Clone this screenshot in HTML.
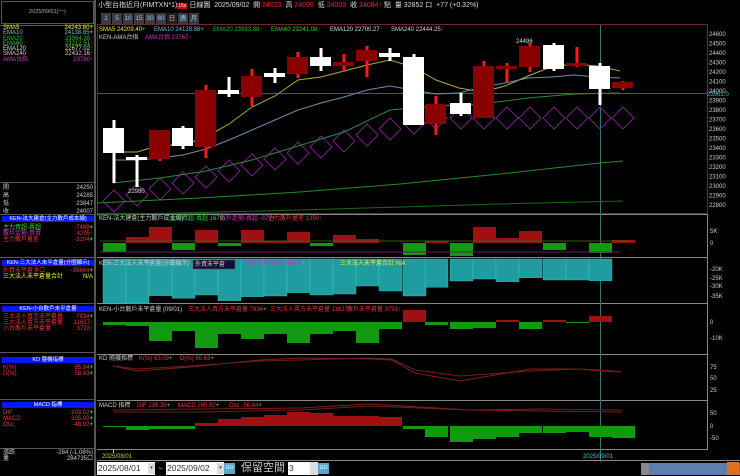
<!DOCTYPE html>
<html><head><meta charset="utf-8">
<style>
*{margin:0;padding:0;box-sizing:border-box}
body{width:740px;height:476px;background:#000;overflow:hidden;position:relative;font-family:"Liberation Sans","Noto Sans CJK TC",sans-serif;color:#ddd}
.a{position:absolute;white-space:nowrap}
.s{font-size:6px;line-height:6px}
.lbl{font-size:6px;line-height:6px}
.bh{position:absolute;left:2px;width:92px;height:6px;background:#0018ff;color:#fff;font-size:5.5px;line-height:6px;text-align:center}
.r{right:0;text-align:right}
.btn{position:absolute;top:13px;height:11px;width:10px;background:#3c3c3c;color:#8cf;font-size:6.5px;line-height:11px;text-align:center}
</style></head><body>
<!-- left panel -->
<div class="a" style="left:0;top:0;width:96px;height:476px;background:#000;border-right:2px solid #555"></div>
<div class="a" style="left:1px;top:1px;width:93px;height:23px;border:1px solid #555;font-size:5.5px;line-height:21px;text-align:center;color:#aaa">2025/09/01(一)</div>
<div class="a" style="left:0;top:25px;width:95px;height:1px;background:#555"></div>
<div class="a s" style="left:3px;top:26px;width:90px;line-height:5.3px">
<div style="color:#ee3"><span>SMA5</span><span style="float:right">24243.60<b style="color:#3e3">+</b></span></div>
<div style="color:#7bd"><span>EMA10</span><span style="float:right">24138.85<b style="color:#3e3">+</b></span></div>
<div style="color:#2b2"><span>EMA20</span><span style="float:right">23984.38<b style="color:#e33">↑</b></span></div>
<div style="color:#3c3"><span>EMA60</span><span style="float:right">23212.51<b style="color:#e33">↑</b></span></div>
<div style="color:#ddd"><span>EMA120</span><span style="float:right">22677.02<b style="color:#e33">↑</b></span></div>
<div style="color:#dcc"><span>SMA240</span><span style="float:right">22432.16<b style="color:#e33">↑</b></span></div>
<div style="color:#c3c"><span>AMA台指</span><span style="float:right">23760<b style="color:#e33">↑</b></span></div>
</div>
<div class="a" style="left:0;top:182px;width:95px;height:1px;background:#555"></div>
<div class="a s" style="left:3px;top:184px;width:90px;line-height:8px;color:#ccc">
<div>開<span style="float:right">24250</span></div>
<div>高<span style="float:right">24285</span></div>
<div>低<span style="float:right">23847</span></div>
<div>收<span style="float:right">24007</span></div>
</div>
<div class="a" style="left:0;top:214px;width:95px;height:1px;background:#555"></div>
<div class="bh" style="top:216px">KEN-法大建倉(主力散戶成本線)</div>
<div class="a s" style="left:3px;top:225px;width:90px;line-height:6px">
<div style="color:#3d3">主力買超-賣超<span style="float:right;color:#e33">-7489<b style="color:#3e3">+</b></span></div>
<div style="color:#c3c">散戶走勢-買賣<span style="float:right;color:#e33">4295<b>↑</b></span></div>
<div style="color:#e33">主力散戶量差<span style="float:right">-3204<b style="color:#3e3">+</b></span></div>
</div>
<div class="a" style="left:0;top:257px;width:95px;height:1px;background:#555"></div>
<div class="bh" style="top:260px">KEN-三大法人未平倉量(分園顯示)</div>
<div class="a s" style="left:3px;top:268px;width:90px;line-height:6px">
<div style="color:#e33">外資未平倉淨口<span style="float:right">-35664<b style="color:#3e3">+</b></span></div>
<div style="color:#ee3">三大法人未平倉量合計<span style="float:right">N/A</span></div>
</div>
<div class="a" style="left:0;top:303px;width:95px;height:1px;background:#555"></div>
<div class="bh" style="top:306px">KEN-小台散戶未平倉量</div>
<div class="a s" style="left:3px;top:314px;width:90px;line-height:6px">
<div style="color:#e33">三大法人買方未平倉量<span style="float:right">7834<b style="color:#3e3">+</b></span></div>
<div style="color:#e33">三大法人賣方未平倉量<span style="float:right">11627<b>↑</b></span></div>
<div style="color:#e33">小台散戶未平倉量<span style="float:right">3793<b>↑</b></span></div>
</div>
<div class="a" style="left:0;top:352px;width:95px;height:1px;background:#555"></div>
<div class="bh" style="top:357px">KD 隨機指標</div>
<div class="a s" style="left:3px;top:365px;width:90px;line-height:6px">
<div style="color:#e33">K(%)<span style="float:right">65.94<b style="color:#3e3">+</b></span></div>
<div style="color:#e33">D(%)<span style="float:right">58.43<b style="color:#3e3">+</b></span></div>
</div>
<div class="a" style="left:0;top:399px;width:95px;height:1px;background:#555"></div>
<div class="bh" style="top:402px">MACD 指標</div>
<div class="a s" style="left:3px;top:410px;width:90px;line-height:6px">
<div style="color:#e33">DIF<span style="float:right">203.02<b style="color:#3e3">+</b></span></div>
<div style="color:#e33">MACD<span style="float:right">205.92<b style="color:#3e3">+</b></span></div>
<div style="color:#e33">Osc<span style="float:right">-48.92<b style="color:#3e3">+</b></span></div>
</div>
<div class="a" style="left:0;top:448px;width:95px;height:1px;background:#555"></div>
<div class="a s" style="left:3px;top:450px;width:90px;line-height:6px;color:#ccc">
<div>漲跌<span style="float:right">-284 (-1.08%)</span></div>
<div>量<span style="float:right">284735口</span></div>
</div>

<!-- header -->
<div class="a" style="left:98px;top:1px;font-size:7px;line-height:9px;color:#ddd">小型台指近月(FIMTXN*1)<span style="background:#c00;color:#fff;font-size:5px;padding:0 1px">15s</span> 日線圖 &nbsp;2025/09/02 &nbsp;開 <span style="color:#e22">24023</span> &nbsp;高 <span style="color:#e22">24096</span> &nbsp;低 <span style="color:#e22">24009</span> &nbsp;收 <span style="color:#e22">24084</span><span style="color:#e22">↑</span> 點 &nbsp;量 32852 口 &nbsp;+77 (+0.32%)</div>
<div class="btn" style="left:101px">1</div>
<div class="btn" style="left:112px">5</div>
<div class="btn" style="left:123px">10</div>
<div class="btn" style="left:134px">15</div>
<div class="btn" style="left:145px">30</div>
<div class="btn" style="left:156px">60</div>
<div class="btn" style="left:167px;background:#222;color:#aaa">日</div>
<div class="btn" style="left:178px">週</div>
<div class="btn" style="left:189px">月</div>

<svg class="a" style="left:0;top:0" width="740" height="476" id="g">
<!-- frames -->
<rect x="97.5" y="24.5" width="610" height="189" fill="none" stroke="#6a2a3a"/>
<g stroke="#888" stroke-width="1">
<line x1="97" y1="214.5" x2="708" y2="214.5"/>
<line x1="97" y1="257.5" x2="708" y2="257.5"/>
<line x1="97" y1="303.5" x2="708" y2="303.5"/>
<line x1="97" y1="354.5" x2="708" y2="354.5"/>
<line x1="97" y1="400.5" x2="708" y2="400.5"/>
<line x1="97" y1="449.5" x2="708" y2="449.5"/>
<line x1="707.5" y1="214" x2="707.5" y2="450"/>
<line x1="97" y1="460.5" x2="740" y2="460.5"/>
</g>
<line x1="98" y1="93.5" x2="707" y2="93.5" stroke="#1d6b6b"/>
<line x1="600.5" y1="25" x2="600.5" y2="462" stroke="#2a7a7a"/>
<g id="dyn"></g>
<!-- texts -->
<g font-size="6" font-family="Liberation Sans, Noto Sans CJK TC, sans-serif">
<text x="99" y="31" fill="#ee3">SMA5 24209.40<tspan fill="#3e3">+</tspan></text>
<text x="154" y="31" fill="#7bd">EMA10 24128.88<tspan fill="#3e3">+</tspan></text>
<text x="213" y="31" fill="#2b2">EMA20 23993.88<tspan fill="#e33">↑</tspan></text>
<text x="271" y="31" fill="#3c3">EMA60 23241.08<tspan fill="#e33">↑</tspan></text>
<text x="330" y="31" fill="#ddd">EMA120 22700.27<tspan fill="#e33">↑</tspan></text>
<text x="391" y="31" fill="#dcc">SMA240 22444.25<tspan fill="#e33">↑</tspan></text>
<text x="99" y="39" fill="#ccc">KEN-AMA台指</text>
<text x="145" y="39" fill="#c3c">AMA台指 23767<tspan fill="#e33">↑</tspan></text>
<text x="516" y="43" fill="#ddd">24496</text>
<text x="128" y="193" fill="#ddd">22980</text>
<g fill="#ccc">
<text x="709" y="36">24600</text><text x="709" y="45.5">24500</text><text x="709" y="55">24400</text><text x="709" y="64.5">24300</text><text x="709" y="74">24200</text><text x="709" y="83.5">24100</text><text x="709" y="93">24000</text><text x="709" y="102.5">23900</text><text x="709" y="112">23800</text><text x="709" y="121.5">23700</text><text x="709" y="131">23600</text><text x="709" y="140.5">23500</text><text x="709" y="150">23400</text><text x="709" y="159.5">23300</text><text x="709" y="169">23200</text><text x="709" y="178.5">23100</text><text x="709" y="188">23000</text><text x="709" y="197.5">22900</text><text x="709" y="207">22800</text>
<text x="710" y="233">5K</text><text x="710" y="245">0</text>
<text x="710" y="271">-20K</text><text x="710" y="280">-25K</text><text x="710" y="288">-30K</text><text x="710" y="298">-35K</text>
<text x="710" y="324">0</text><text x="710" y="340">-10K</text>
<text x="710" y="369">75</text><text x="710" y="380">50</text><text x="710" y="392">25</text>
<text x="710" y="415">50</text><text x="710" y="428">0</text><text x="710" y="440">-50</text>
</g>
<text x="707" y="96" fill="#3cc">23961.0</text>
<text x="99" y="220" fill="#ccc">KEN-法大建倉(主力散戶成本線)</text>
<text x="170" y="220" fill="#3d3">主力買超-賣超 1679<tspan fill="#e33">↑</tspan></text>
<text x="220" y="220" fill="#c3c">散戶走勢-賣超 -379<tspan fill="#3e3">+</tspan></text>
<text x="268" y="220" fill="#e33">主力散戶量差 1350<tspan>↑</tspan></text>
<text x="99" y="265" fill="#ccc">KEN-三大法人未平倉量(分園顯示)</text>
<rect x="193" y="260" width="42" height="9" fill="#113" stroke="#555" stroke-width=".5"/>
<text x="195" y="266" fill="#ccc">外資未平倉</text>
<text x="245" y="265" fill="#c3c">外資平倉淨口 -35664<tspan fill="#3e3">+</tspan></text>
<text x="340" y="265" fill="#ee3">三大法人未平倉合計 N/A</text>
<text x="99" y="311" fill="#ccc">KEN-小台散戶未平倉量 (09/01)</text>
<text x="188" y="311" fill="#e33">三大法人買方未平倉量 7834<tspan fill="#3e3">+</tspan></text>
<text x="270" y="311" fill="#e33">三大法人賣方未平倉量 11627<tspan>↑</tspan></text>
<text x="347" y="311" fill="#e33">散戶未平倉量 3793<tspan>↑</tspan></text>
<text x="99" y="360" fill="#ccc">KD 隨機指標</text>
<text x="139" y="360" fill="#e33">K(%) 63.09<tspan fill="#3e3">+</tspan></text>
<text x="180" y="360" fill="#e33">D(%) 66.63<tspan fill="#3e3">+</tspan></text>
<text x="99" y="407" fill="#ccc">MACD 指標</text>
<text x="137" y="407" fill="#e33">DIF 239.39<tspan fill="#3e3">+</tspan></text>
<text x="178" y="407" fill="#e33">MACD 295.82<tspan fill="#3e3">+</tspan></text>
<text x="229" y="407" fill="#e33">Osc -56.44<tspan fill="#3e3">+</tspan></text>
<text x="102" y="458" fill="#cc3">2025/08/01</text>
<text x="583" y="458" fill="#3cc">2025/09/01</text>
</g>
<line x1="113.5" y1="450" x2="113.5" y2="453" stroke="#cc3"/>
</svg>

<!-- bottom bar -->
<div class="a" style="left:97px;top:462px;width:58px;height:13px;background:#fff;color:#333;font-size:8.5px;line-height:13px;padding-left:1px">2025/08/01<span style="position:absolute;right:0;top:1px;width:7px;height:11px;background:#ddd;font-size:5px;line-height:11px;text-align:center">▾</span></div>
<div class="a" style="left:158px;top:462px;font-size:8px;color:#ccc;line-height:13px">~</div>
<div class="a" style="left:166px;top:462px;width:58px;height:13px;background:#fff;color:#333;font-size:8.5px;line-height:13px;padding-left:1px">2025/09/02<span style="position:absolute;right:0;top:1px;width:7px;height:11px;background:#ddd;font-size:5px;line-height:11px;text-align:center">▾</span></div>
<div class="a" style="left:224px;top:463px;width:11px;height:11px;background:#5ac;color:#fff;font-size:5px;line-height:11px;text-align:center">GO</div>
<div class="a" style="left:241px;top:461px;font-size:11px;color:#ccc;line-height:14px">保留空間</div>
<div class="a" style="left:288px;top:462px;width:30px;height:13px;background:#fff;color:#333;font-size:8.5px;line-height:13px;padding-left:1px">3</div>
<div class="a" style="left:310px;top:462px;width:8px;height:13px;background:#ddd"></div>
<div class="a" style="left:318px;top:463px;width:11px;height:11px;background:#5ac;color:#fff;font-size:5px;line-height:11px;text-align:center">GO</div>
<div class="a" style="left:641px;top:463px;width:99px;height:12px;background:#5a7fb0"></div>
<div class="a" style="left:641px;top:463px;width:8px;height:12px;background:#888"></div>
<div class="a" style="left:727px;top:462px;width:12px;height:13px;background:#e07020"></div>

<script>
var NS="http://www.w3.org/2000/svg",g=document.getElementById('dyn');
function el(t,a){var e=document.createElementNS(NS,t);for(var k in a)e.setAttribute(k,a[k]);g.appendChild(e);return e;}
var X=[103,126,149,172,195,218,241,264,287,310,333,356,379,403,425,450,473,496,519,543,566,589,612];
function cx(i){return X[i]+11;}
// diamonds
for(var i=0;i<23;i++){var c=cx(i);var y=i<13?201-(i*(78/13)):(i<14?123:118);
el('path',{d:'M'+(c-11)+' '+y+' L'+c+' '+(y-11)+' L'+(c+11)+' '+y+' L'+c+' '+(y+11)+'Z',fill:'none',stroke:'#7a1f8a','stroke-width':1});}
// candles: [type, bodyTop, bodyBot, wickTop, wickBot]
var C=[['w',128,153,120,183],['w',157,159,155,187],['r',130,159,130,161],['w',128,146,126,149],['r',90,147,85,158],['w',90,94,77,97],['r',76,97,69,106],['w',73,77,68,83],['r',57,74,52,78],['w',57,66,48,71],['r',62,66,54,72],['r',50,61,46,77],['w',53,57,48,61],['w',57,125,54,125],['r',104,124,96,135],['w',103,114,93,116],['r',66,118,61,118],['r',66,68,63,82],['r',46,67,43,72],['w',45,69,43,71],['r',63,66,47,67],['w',66,89,63,105],['r',82,88,81,90]];
// lines first
function poly(pts,col,w){el('polyline',{points:pts.map(function(p){return p[0]+','+p[1]}).join(' '),fill:'none',stroke:col,'stroke-width':w||1});}
poly([[113,152],[137,152],[160,145],[183,145],[206,137],[229,124],[252,107],[275,96],[298,80],[321,77],[344,71],[367,65],[390,60],[413,67],[436,80],[459,88],[482,92],[505,86],[528,76],[551,67],[574,64],[597,66],[620,71]],'#b8a830');
poly([[113,160],[137,160],[160,158],[183,155],[206,149],[229,140],[252,130],[275,120],[298,110],[321,103],[344,97],[367,90],[390,86],[413,90],[436,94],[459,93],[482,87],[505,83],[528,78],[551,77],[574,75],[597,77],[620,78]],'#6a90a8');
poly([[113,183],[160,178],[206,171],[252,160],[298,146],[344,132],[390,110],[436,106],[482,104],[528,98],[574,94],[620,93]],'#2c8c3c');
poly([[97,203],[200,198],[300,192],[400,184],[500,174],[600,163],[623,161]],'#2a8a2a');
poly([[97,215],[300,210],[500,204],[623,201]],'#1a6a1a');
for(var i=0;i<23;i++){var c=C[i],x=X[i],m=cx(i);
var wc=c[0]=='w'?'#fff':'#ff1818',bc=c[0]=='w'?'#fff':'#8a0000';
el('rect',{x:m-1.5,y:c[3],width:3,height:c[4]-c[3],fill:wc});
el('rect',{x:x,y:c[1],width:21,height:Math.max(c[2]-c[1],3),fill:bc});}
// pane2
var P2=[-9,6,16,-7,13,-3,13,2,11,-3,8,4,0,-12,2,-13,16,5,12,-7,0,-10,3];
for(var i=0;i<23;i++){var v=P2[i],x=X[i];if(!v)continue;
el('rect',{x:x,y:v>0?243-v:243,width:23,height:Math.abs(v),fill:v>0?'#a01010':'#119a11'});}
el('line',{x1:100,y1:241,x2:630,y2:241,stroke:'#3a5a10'});
el('line',{x1:100,y1:252,x2:620,y2:252,stroke:'#6a1a6a'});
// pane3
var P3=[280,278,257,265,255,272,260,258,248,255,252,228,243,258,232,213,207,215,203,210,210,212];
for(var i=0;i<22;i++){var b=210+P3[i]/3;el('rect',{x:X[i],y:259,width:23,height:b-259,fill:'#1e9ca0',stroke:'#3cc','stroke-width':.4});}
// pane4
var P4=[325,326,341,331,348,334,339,334,343,334,331,343,329,-310,325,329,328,-320,329,-320,323,-316];
for(var i=0;i<22;i++){var v=P4[i],x=X[i];
if(v>0)el('rect',{x:x,y:322,width:23,height:v-322,fill:'#119a11'});
else el('rect',{x:x,y:-v,width:23,height:322+v,fill:'#a01010'});}
// KD
poly([[113,366],[137,371],[190,367],[260,360],[300,358],[370,359],[392,360],[415,373],[460,381],[530,369],[580,369],[600,371],[622,372]],'#8a1a1a');
poly([[113,366],[137,369],[190,366],[260,361],[300,360],[370,358],[392,359],[415,370],[460,376],[530,371],[580,369],[600,370],[622,372]],'#6a2020');
// MACD
var M=[427,430,429,429,423,419,417,415,412,413,416,416,417,429,437,442,439,437,433,433,432,437,438];
for(var i=0;i<23;i++){var v=M[i],x=X[i];
if(v>=426)el('rect',{x:x,y:426,width:23,height:Math.max(v-426,1),fill:'#119a11'});
else el('rect',{x:x,y:v,width:23,height:426-v,fill:'#a01010'});}
poly([[113,410],[200,409],[300,408],[370,404],[420,407],[470,410],[540,411],[622,412]],'#8a1a1a');
poly([[113,412],[200,412],[300,410],[370,406],[420,408],[470,410],[540,409],[622,410]],'#6a2020');
</script>
</body></html>
